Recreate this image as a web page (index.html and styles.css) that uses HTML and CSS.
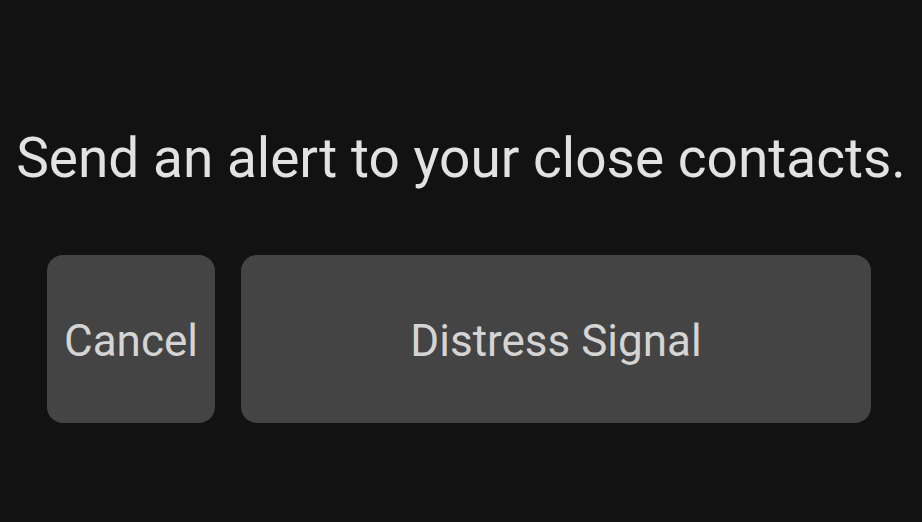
FILE: index.html
```html
<!DOCTYPE html>
<html>
<head>
<meta charset="utf-8">
<link rel="stylesheet" href="styles.css">
</head>
<body>
<main class="screen">
  <p class="message">Send an alert to your close contacts.</p>
  <div class="actions">
    <button class="btn btn-cancel">Cancel</button>
    <button class="btn btn-signal">Distress Signal</button>
  </div>
</main>
</body>
</html>
```
FILE: styles.css
```css
html, body {
  margin: 0;
  padding: 0;
  background: #121212;
  width: 922px;
  height: 522px;
  overflow: hidden;
}
.screen {
  display: flex;
  flex-direction: column;
  align-items: center;
  padding-top: 124px;
  font-family: Roboto, "Noto Sans", sans-serif;
}
.message {
  margin: 0;
  color: #e2e2e2;
  font-size: 55px;
  line-height: 68px;
  white-space: nowrap;
}
.actions {
  display: flex;
  gap: 26px;
  margin-top: 63px;
  padding-left: 47px;
  padding-right: 51px;
  align-self: stretch;
}
.btn {
  border: none;
  background: #444444;
  color: #d4d4d4;
  font-family: Roboto, "Noto Sans", sans-serif;
  font-size: 44px;
  height: 168px;
  border-radius: 16px;
  padding: 4px 0 0;
}
.btn-cancel {
  width: 168px;
  flex: none;
}
.btn-signal {
  flex: 1;
}
```
